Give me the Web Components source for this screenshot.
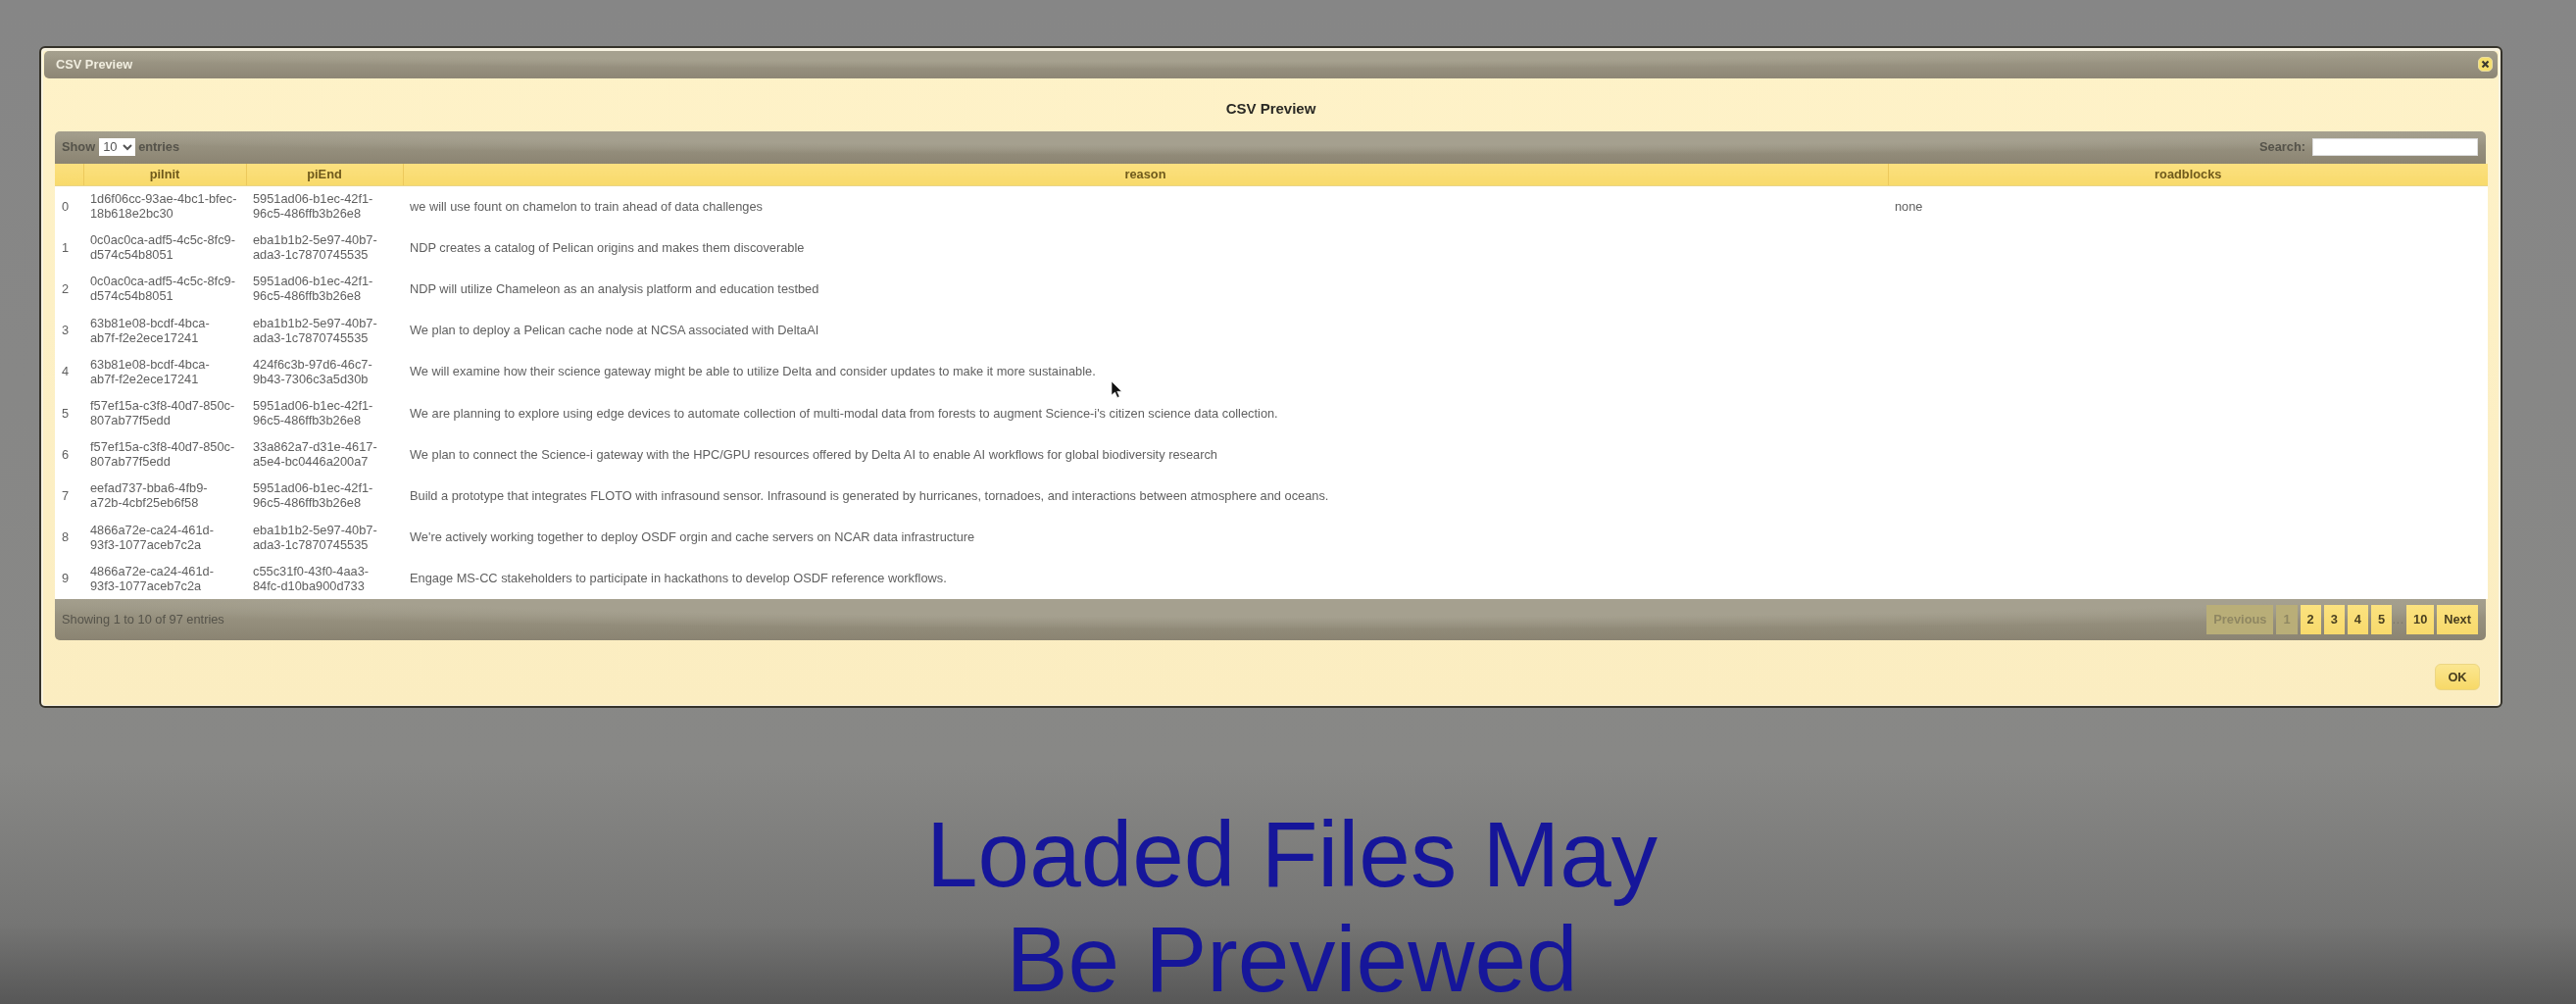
<!DOCTYPE html>
<html>
<head>
<meta charset="utf-8">
<title>CSV Preview</title>
<style>
  html, body { margin: 0; height: 1024px; overflow: hidden; }
  body {
    font-family: "Liberation Sans", Arial, sans-serif;
    background: linear-gradient(180deg, #868686 0, #888886 76%, #757574 92%, #575757 100%);
  }
</style>
</head>
<body>

<template id="preview-dialog-template">
  <style>
    :host {
      display: block; box-sizing: border-box; width: 2513px; height: 675px;
      margin: 47px 0 0 40px; position: relative;
      border: 2px solid #35322a; border-radius: 6px;
      background: linear-gradient(180deg, #fef2c8, #fbedc1);
      box-shadow: inset 0 1px 0 2px #f8f3e2;
      padding: 3px 3px 0 3px;
      filter: blur(.45px);
    }
    .bar {
      display: flex; align-items: center; justify-content: space-between;
      box-sizing: border-box; height: 28px; padding: 0 5px 2px 12px; border-radius: 5px;
      color: #f1eee0; font: bold 12.8px "Liberation Sans", sans-serif;
      background:
        radial-gradient(ellipse 62% 95% at 45% -30%, #a6a18f 0 70%, transparent 100%),
        linear-gradient(180deg, #a29d8b 0, #8d8675 100%);
    }
    .close {
      width: 15px; height: 15px; border-radius: 5px; box-sizing: border-box;
      background: #f6e06f; border: 1px solid #e8dca0;
      display: flex; align-items: center; justify-content: center;
    }
    h2 {
      margin: 0; height: 54px;  text-align: center;
      font: bold 15px/61px "Liberation Sans", sans-serif; color: #2b2a25;
    }
    .body { padding: 0 10px 0 11px; }
    .actions { display: flex; justify-content: flex-end; padding: 24px 18px 0 0; }
  </style>
  <div class="bar">
    <span id="title"></span>
    <span class="close"><svg width="9" height="9" viewBox="0 0 9 9"><path d="M1.5 1.5l6 6M7.5 1.5l-6 6" stroke="#3c3a30" stroke-width="2.2"/></svg></span>
  </div>
  <h2 id="head"></h2>
  <div class="body"><slot></slot></div>
  <div class="actions"><slot name="actions"></slot></div>
</template>

<template id="band-bar-template">
  <style>
    :host {
      display: flex; align-items: center; justify-content: space-between;
      box-sizing: border-box; padding: 0 8px 0 7px; margin-right: 2px;
      color: #55534a; font: 12.8px "Liberation Sans", sans-serif;
      background:
        radial-gradient(ellipse 66% 95% at 52% -22%, #a5a08f 0 68%, transparent 100%),
        linear-gradient(180deg, #a09b89 0, #8b8472 100%);
    }
    :host([top]) { height: 33px; padding-bottom: 2px; border-radius: 5px 5px 0 0; }
    :host([bottom]) { height: 42px; border-radius: 0 0 5px 5px; }
    .side { display: flex; align-items: center; }
  </style>
  <div class="side"><slot name="left"></slot></div>
  <div class="side"><slot name="right"></slot></div>
</template>

<template id="csv-table-template">
  <style>
    :host { display: block; }
    table {
      width: 2482px; border-collapse: collapse; table-layout: fixed;
      background: #fff; font: 12.8px/15px "Liberation Sans", sans-serif; color: #5f5f5f;
    }
    th {
      height: 22px; padding: 0; font-weight: bold; color: #6f5a1c; text-align: center;
      background: linear-gradient(180deg, #fbe07f, #f8da6b);
      border-left: 1px solid #ecc95c; border-bottom: 1px solid #e8d489;
      box-sizing: border-box;
    }
    th:first-child { border-left: 0; }
    td { height: 42.2px; padding: 0 7px; box-sizing: border-box; vertical-align: middle; }
    td:nth-child(2) { padding-right: 9px; }
  </style>
  <table>
    <colgroup><col style="width:29px"><col style="width:166px"><col style="width:160px"><col style="width:1515px"><col style="width:612px"></colgroup>
    <thead><tr><th></th><th>piInit</th><th>piEnd</th><th>reason</th><th>roadblocks</th></tr></thead>
    <tbody id="rows"></tbody>
  </table>
</template>

<template id="page-button-template">
  <style>
    :host {
      display: inline-flex; align-items: center; justify-content: center;
      box-sizing: border-box; height: 30px; margin-left: 3px; padding: 0 7px;
      font: bold 12.8px "Liberation Sans", sans-serif; color: #4a4020;
      background: linear-gradient(180deg, #fbe27f, #f8da6c);
      border: 0;
    }
    :host([off]) { color: #8f8762; background: #b9ae78; }
  </style>
  <slot></slot>
</template>

<template id="ok-button-template">
  <style>
    :host {
      display: inline-flex; align-items: center; justify-content: center;
      box-sizing: border-box; width: 46px; height: 27px; border-radius: 6px;
      font: bold 12.8px "Liberation Sans", sans-serif; color: #4a4020;
      background: linear-gradient(180deg, #fbe691, #f7d967);
      border: 1px solid #ecd683;
    }
  </style>
  <slot></slot>
</template>

<template id="slide-heading-template">
  <style>
    :host {
      display: block; margin-top: 96px; text-align: center; padding-left: 8px;
      font: 94.5px/107px "Liberation Sans", sans-serif; color: #16169a;
      filter: blur(.4px);
    }
  </style>
  <slot></slot>
</template>

<preview-dialog heading="CSV Preview">
  <band-bar top>
    <span slot="left" style="display:flex;align-items:center;font-weight:bold">Show
      <select style="width:37px;height:18px;margin:0 3px 0 4px;padding:0;border:0;background:#fff;color:#555;font:13px 'Liberation Sans',sans-serif"><option>10</option></select>
      entries</span>
    <span slot="right" style="display:flex;align-items:center;font-weight:bold">Search:
      <input style="width:169px;height:18px;box-sizing:border-box;margin-left:7px;border:1px solid #ddd;padding:0;background:#fff"></span>
  </band-bar>
  <csv-table></csv-table>
  <band-bar bottom>
    <span slot="left">Showing 1 to 10 of 97 entries</span>
    <span slot="right" style="display:flex;align-items:center">
      <page-button off>Previous</page-button>
      <page-button off>1</page-button>
      <page-button>2</page-button>
      <page-button>3</page-button>
      <page-button>4</page-button>
      <page-button>5</page-button>
      <span style="width:12px;text-align:center;color:#7c776a">…</span>
      <page-button>10</page-button>
      <page-button>Next</page-button>
    </span>
  </band-bar>
  <ok-button slot="actions">OK</ok-button>
</preview-dialog>

<slide-heading>Loaded Files May<br>Be Previewed</slide-heading>

<svg style="position:absolute;left:1133px;top:388px" width="13" height="20" viewBox="0 0 13 20"><path d="M1 1v14l3.5-3 2.4 5.5 2.2-1-2.4-5.2h4.6z" fill="#111" stroke="#fff" stroke-width=".6"/></svg>

<script>
const ROWS = [
  ['1d6f06cc-93ae-4bc1-bfec-18b618e2bc30', '5951ad06-b1ec-42f1-96c5-486ffb3b26e8', 'we will use fount on chamelon to train ahead of data challenges', 'none'],
  ['0c0ac0ca-adf5-4c5c-8fc9-d574c54b8051', 'eba1b1b2-5e97-40b7-ada3-1c7870745535', 'NDP creates a catalog of Pelican origins and makes them discoverable', ''],
  ['0c0ac0ca-adf5-4c5c-8fc9-d574c54b8051', '5951ad06-b1ec-42f1-96c5-486ffb3b26e8', 'NDP will utilize Chameleon as an analysis platform and education testbed', ''],
  ['63b81e08-bcdf-4bca-ab7f-f2e2ece17241', 'eba1b1b2-5e97-40b7-ada3-1c7870745535', 'We plan to deploy a Pelican cache node at NCSA associated with DeltaAI', ''],
  ['63b81e08-bcdf-4bca-ab7f-f2e2ece17241', '424f6c3b-97d6-46c7-9b43-7306c3a5d30b', 'We will examine how their science gateway might be able to utilize Delta and consider updates to make it more sustainable.', ''],
  ['f57ef15a-c3f8-40d7-850c-807ab77f5edd', '5951ad06-b1ec-42f1-96c5-486ffb3b26e8', "We are planning to explore using edge devices to automate collection of multi-modal data from forests to augment Science-i's citizen science data collection.", ''],
  ['f57ef15a-c3f8-40d7-850c-807ab77f5edd', '33a862a7-d31e-4617-a5e4-bc0446a200a7', 'We plan to connect the Science-i gateway with the HPC/GPU resources offered by Delta AI to enable AI workflows for global biodiversity research', ''],
  ['eefad737-bba6-4fb9-a72b-4cbf25eb6f58', '5951ad06-b1ec-42f1-96c5-486ffb3b26e8', 'Build a prototype that integrates FLOTO with infrasound sensor. Infrasound is generated by hurricanes, tornadoes, and interactions between atmosphere and oceans.', ''],
  ['4866a72e-ca24-461d-93f3-1077aceb7c2a', 'eba1b1b2-5e97-40b7-ada3-1c7870745535', "We're actively working together to deploy OSDF orgin and cache servers on NCAR data infrastructure", ''],
  ['4866a72e-ca24-461d-93f3-1077aceb7c2a', 'c55c31f0-43f0-4aa3-84fc-d10ba900d733', 'Engage MS-CC stakeholders to participate in hackathons to develop OSDF reference workflows.', '']
];

/* plain template-backed elements */
function simple(name, templateId) {
  customElements.define(name, class extends HTMLElement {
    constructor() {
      super();
      let template = document.getElementById(templateId).content;
      this.attachShadow({mode: 'open'}).appendChild(template.cloneNode(true));
    }
  });
}
simple('band-bar', 'band-bar-template');
simple('page-button', 'page-button-template');
simple('ok-button', 'ok-button-template');
simple('slide-heading', 'slide-heading-template');

customElements.define('preview-dialog', class extends HTMLElement {
  constructor() {
    super();
    let template = document.getElementById('preview-dialog-template').content;
    this.attachShadow({mode: 'open'}).appendChild(template.cloneNode(true));
  }
  connectedCallback() {
    let heading = this.getAttribute('heading');
    this.shadowRoot.getElementById('title').textContent = heading;
    this.shadowRoot.getElementById('head').textContent = heading;
  }
});

customElements.define('csv-table', class extends HTMLElement {
  constructor() {
    super();
    let template = document.getElementById('csv-table-template').content;
    this.attachShadow({mode: 'open'}).appendChild(template.cloneNode(true));
    let body = this.shadowRoot.getElementById('rows');
    ROWS.forEach((row, i) => {
      let tr = document.createElement('tr');
      [String(i), ...row].forEach(text => {
        let td = document.createElement('td');
        td.textContent = text;
        tr.appendChild(td);
      });
      body.appendChild(tr);
    });
  }
});
</script>
</body>
</html>
